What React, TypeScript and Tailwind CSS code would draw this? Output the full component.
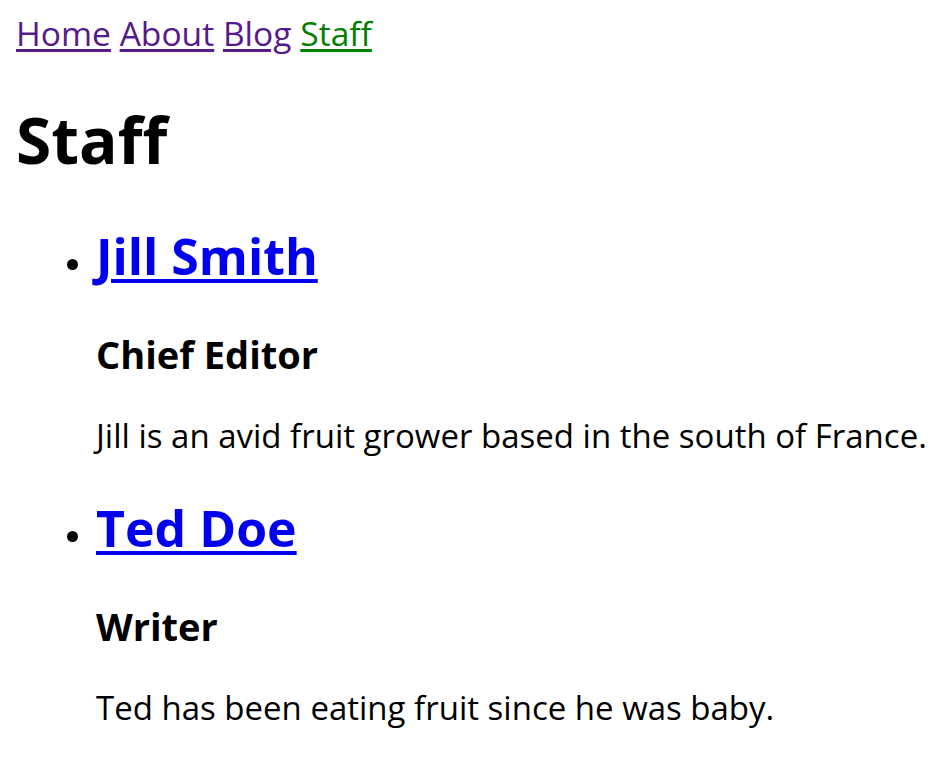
const staff = [
  { name: "Jill Smith", title: "Chief Editor", bio: "Jill is an avid fruit grower based in the south of France." },
  { name: "Ted Doe", title: "Writer", bio: "Ted has been eating fruit since he was baby." },
];

const links = [
  { label: "Home", active: false },
  { label: "About", active: false },
  { label: "Blog", active: false },
  { label: "Staff", active: true },
];

export default function App() {
  return (
    <div className="min-h-screen bg-white px-4 pt-[13px] text-black font-['Open_Sans',sans-serif]">
      <nav className="text-[33.6px] leading-[40px] whitespace-nowrap">
        {links.map((l, i) => (
          <span key={l.label}>
            <a
              href="#"
              className={`underline underline-offset-[3px] decoration-[3px] ${
                l.active ? "text-[#008000]" : "text-[#551a8b]"
              }`}
            >
              {l.label}
            </a>
            {i < links.length - 1 ? " " : ""}
          </span>
        ))}
      </nav>

      <h1 className="mt-[51px] text-[64px] leading-[72px] font-bold">Staff</h1>

      <ul className="mt-[52px] pl-[80px] list-disc">
        {staff.map((s, i) => (
          <li key={s.name} className={`text-[32px] ${i > 0 ? "mt-[44px]" : ""}`}>
            <h2 className="text-[50px] leading-[56px] font-bold">
              <a href="#" className="text-[#0000ee] underline underline-offset-[4px] decoration-[4px]">
                {s.name}
              </a>
            </h2>
            <h3 className="mt-[48px] text-[38px] leading-[44px] font-bold">{s.title}</h3>
            <p className="mt-[40px] text-[33px] leading-[40px] whitespace-nowrap">{s.bio}</p>
          </li>
        ))}
      </ul>
    </div>
  );
}
